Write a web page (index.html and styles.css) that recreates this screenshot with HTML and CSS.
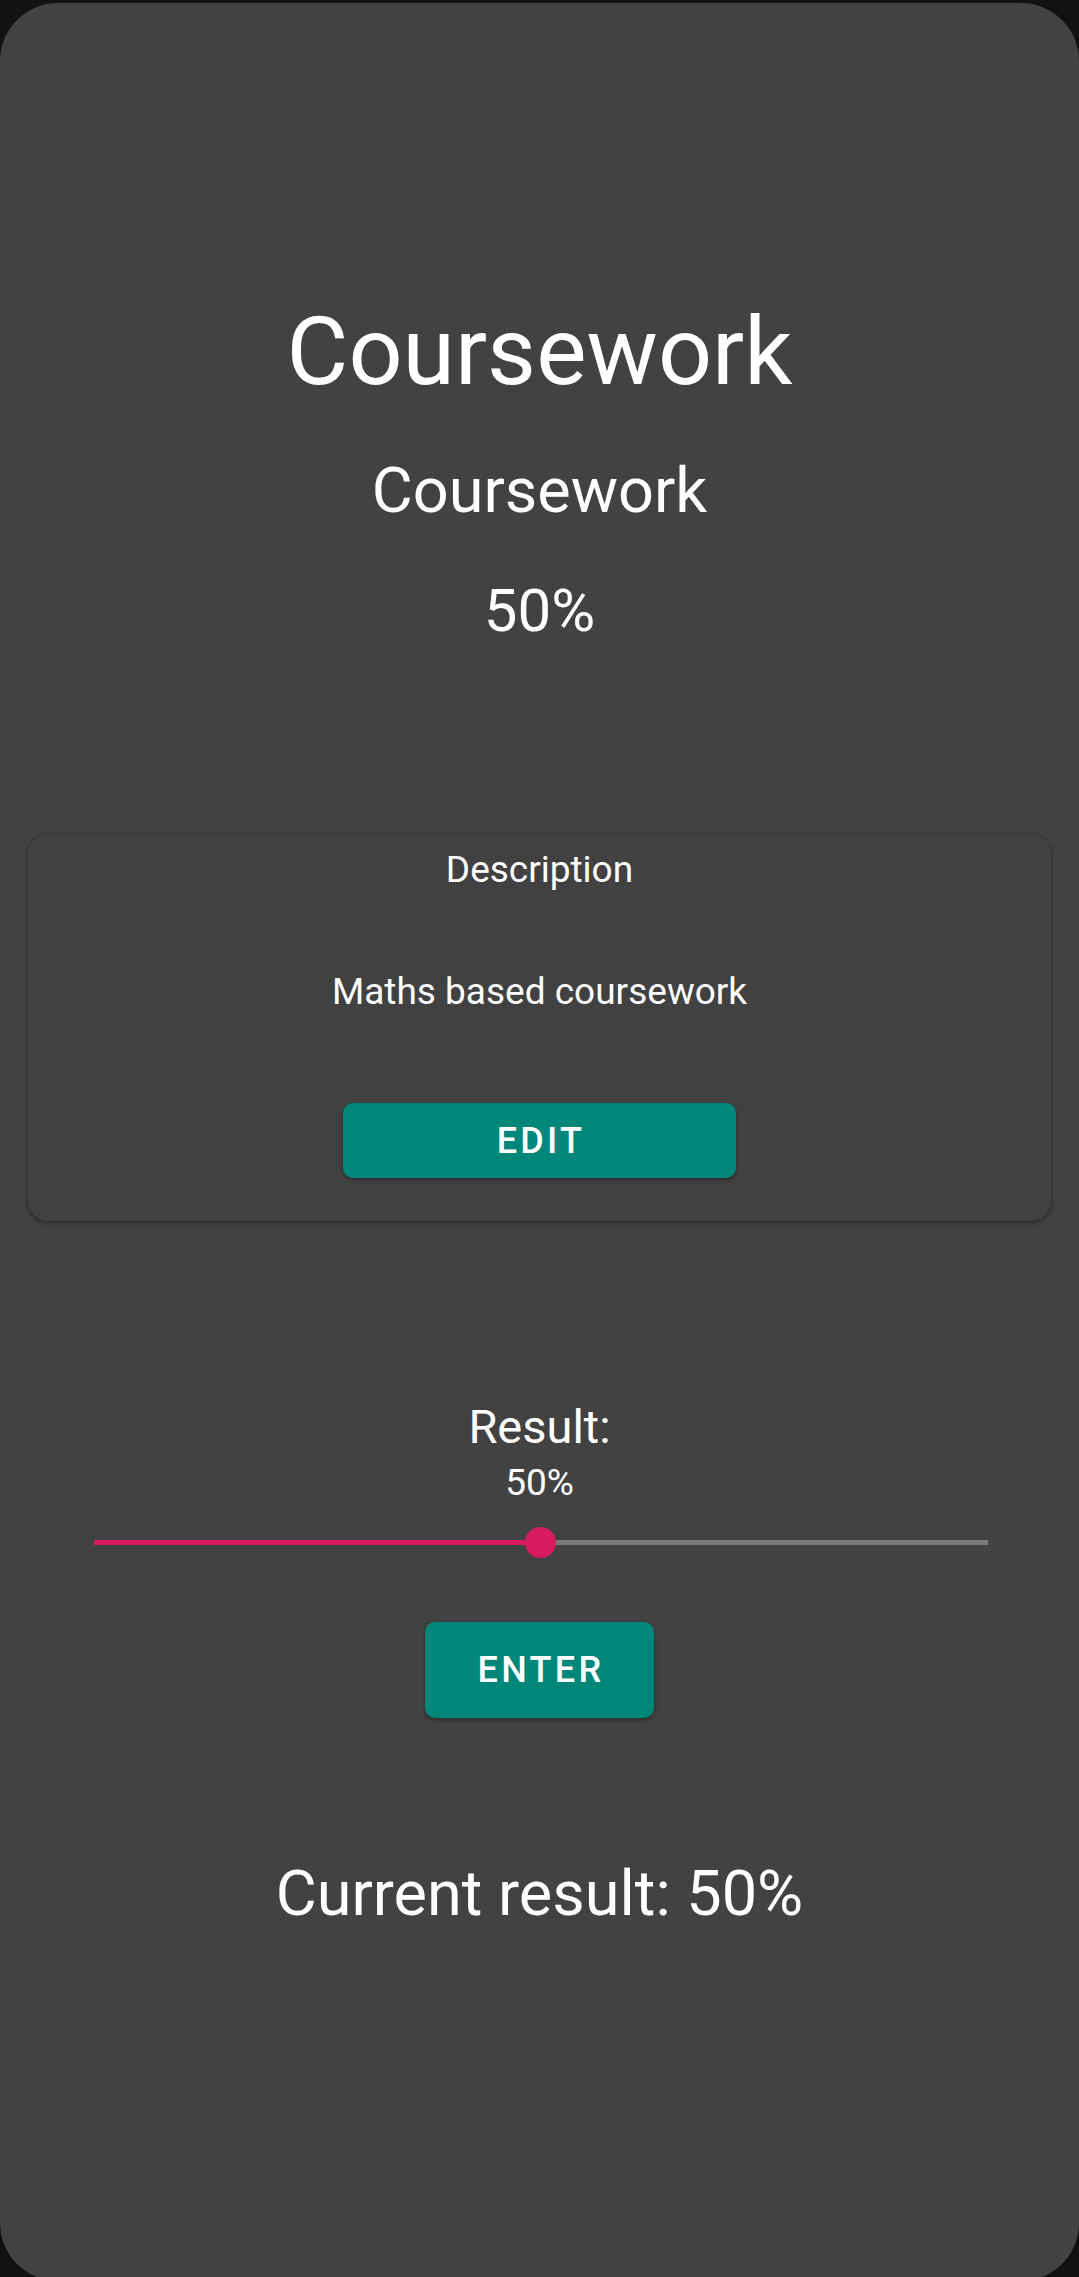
FILE: index.html
```html
<!DOCTYPE html>
<html lang="en">
<head>
<meta charset="utf-8">
<title>Coursework</title>
<link rel="stylesheet" href="styles.css">
</head>
<body>
<main class="screen">
  <h1 class="title">Coursework</h1>
  <h2 class="subtitle">Coursework</h2>
  <div class="weight">50%</div>

  <section class="card">
    <div class="card-label">Description</div>
    <div class="card-text">Maths based coursework</div>
    <button class="btn btn-edit">EDIT</button>
  </section>

  <div class="result-label">Result:</div>
  <div class="result-value">50%</div>
  <div class="slider">
    <div class="track">
      <div class="track-active" style="width: 50%"></div>
      <div class="thumb" style="left: 50%"></div>
    </div>
  </div>
  <button class="btn btn-enter">ENTER</button>

  <div class="current">Current result: 50%</div>
</main>
</body>
</html>
```

FILE: styles.css
```css
html, body {
  margin: 0;
  padding: 0;
}
body {
  background: #121212;
  width: 1079px;
  height: 2277px;
  overflow: hidden;
  font-family: Roboto, "Liberation Sans", sans-serif;
  color: #ffffff;
}
.screen {
  margin-top: 3px;
  height: 2278px;
  background: #424242;
  border-radius: 58px;
  display: flex;
  flex-direction: column;
  align-items: center;
  box-sizing: border-box;
  padding-top: 294px;
}
.title {
  margin: 0;
  font-weight: 400;
  font-size: 95px;
  line-height: 110px;
}
.subtitle {
  margin: 47px 0 0;
  font-weight: 400;
  font-size: 63px;
  line-height: 73px;
}
.weight {
  margin-top: 50px;
  font-size: 60px;
  line-height: 68px;
}
.card {
  margin-top: 189px;
  width: 1023px;
  box-sizing: border-box;
  padding: 15px 0 43px;
  border-radius: 20px;
  background: #414141;
  box-shadow: 0 2px 5px rgba(0, 0, 0, 0.35), 0 0 2px rgba(0, 0, 0, 0.2);
  display: flex;
  flex-direction: column;
  align-items: center;
  align-self: flex-start;
  margin-left: 28px;
}
.card-label {
  font-size: 37px;
  line-height: 42px;
}
.card-text {
  margin-top: 80px;
  font-size: 37px;
  line-height: 42px;
}
.btn {
  border: none;
  background: #01877a;
  color: #ffffff;
  font-family: Roboto, "Liberation Sans", sans-serif;
  font-weight: 500;
  font-size: 36px;
  line-height: 42px;
  letter-spacing: 3.3px;
  border-radius: 10px;
  box-shadow: 0 2px 4px rgba(0, 0, 0, 0.35);
  display: flex;
  align-items: center;
  justify-content: center;
  padding: 0 0 0 3px;
}
.btn-edit {
  margin-top: 90px;
  width: 393px;
  height: 75px;
}
.result-label {
  margin-top: 179px;
  font-size: 47px;
  line-height: 54px;
}
.result-value {
  margin-top: 9px;
  font-size: 37px;
  line-height: 40px;
}
.slider {
  margin-top: 19px;
  width: 894px;
  height: 40px;
  display: flex;
  align-items: center;
  margin-left: 2px;
}
.track {
  position: relative;
  width: 100%;
  height: 5px;
  background: #7a7a7a;
}
.track-active {
  height: 100%;
  background: #d81b60;
}
.thumb {
  position: absolute;
  top: 50%;
  width: 31px;
  height: 31px;
  margin-left: -15.5px;
  margin-top: -15.5px;
  border-radius: 50%;
  background: #d81b60;
}
.btn-enter {
  margin-top: 60px;
  width: 229px;
  height: 96px;
}
.current {
  margin-top: 139px;
  font-size: 63px;
  line-height: 73px;
}
```
